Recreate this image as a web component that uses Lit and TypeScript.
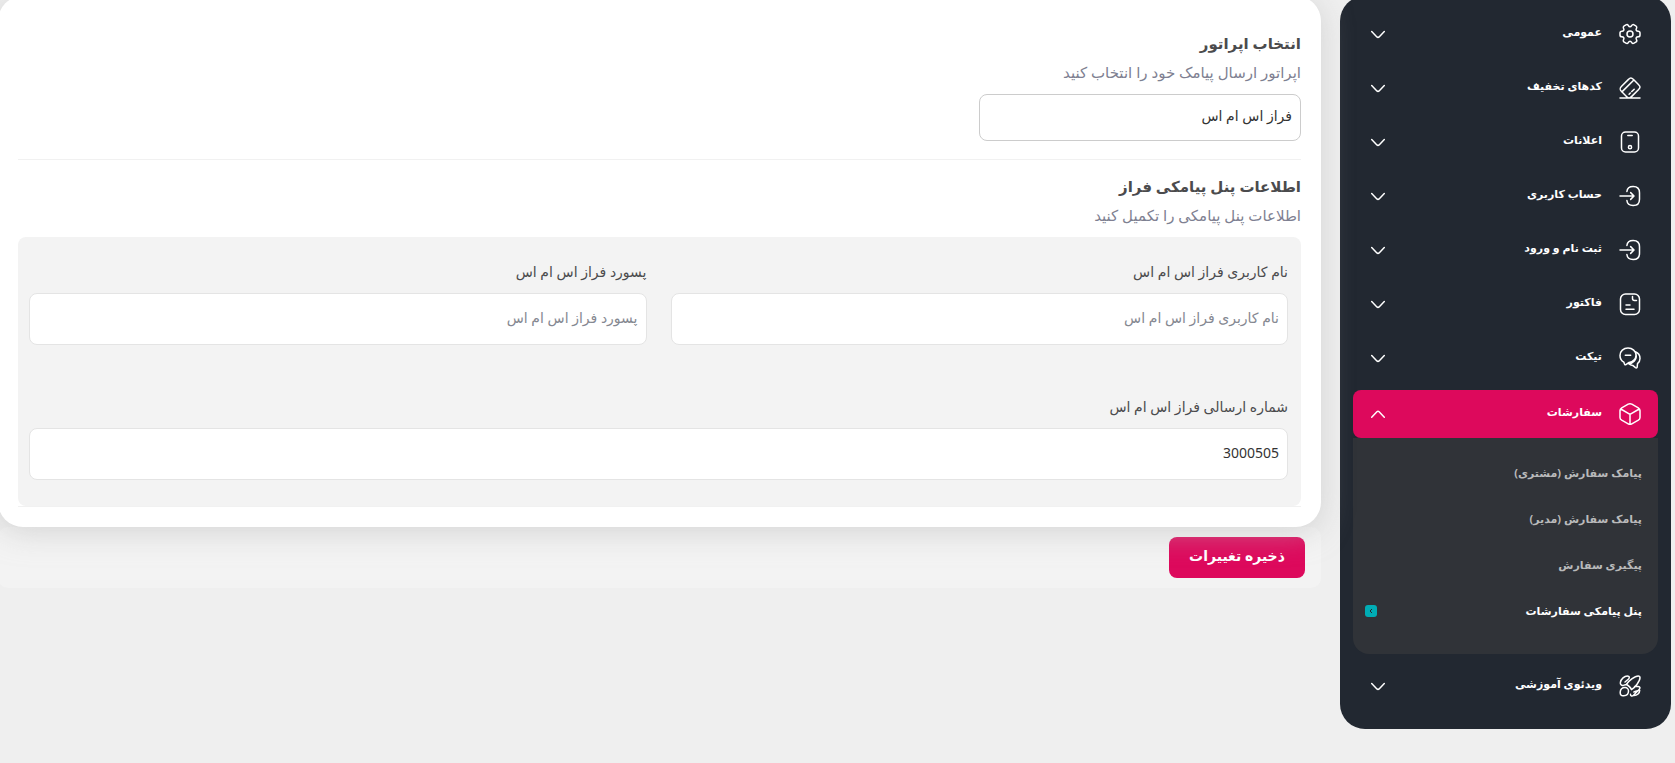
import { LitElement, html, svg, css, nothing } from "lit";
import { customElement, state } from "lit/decorators.js";

const icons: Record<string, unknown> = {
  gear: svg`<circle cx="12" cy="12" r="3"/><path d="M2 12.880v-1.760c0-1.040.85-1.900 1.900-1.900 1.810 0 2.550-1.280 1.640-2.850-.52-.9-.21-2.070.7-2.590l1.730-.99c.79-.47 1.810-.19 2.280.6l.11.19c.9 1.570 2.380 1.570 3.290 0l.11-.19c.47-.79 1.490-1.070 2.280-.6l1.730.99c.91.52 1.220 1.690.7 2.590-.91 1.570-.17 2.850 1.640 2.850 1.040 0 1.900.85 1.900 1.900v1.760c0 1.040-.85 1.900-1.900 1.900-1.810 0-2.550 1.280-1.640 2.850.52.91.21 2.070-.7 2.590l-1.730.99c-.79.47-1.810.19-2.280-.6l-.11-.19c-.9-1.570-2.380-1.570-3.290 0l-.11.19c-.47.79-1.490 1.070-2.280.6l-1.730-.99c-.91-.52-1.220-1.690-.7-2.590.91-1.570.17-2.850-1.640-2.850-1.050 0-1.900-.86-1.900-1.900Z"/>`,
  tag: svg`<path d="M3.600 10.240 10.240 3.600c2.120-2.120 3.180-2.130 5.280-.03l4.910 4.910c2.100 2.100 2.090 3.160-.03 5.280l-6.640 6.640c-2.120 2.120-3.180 2.130-5.280.03l-4.910-4.910c-2.100-2.100-2.100-3.150.03-5.280ZM3.930 15.880 15.880 3.930M11.100 18.280l1.200-1.200M13.790 15.590l2.390-2.390M2 22h20"/>`,
  phone: svg`<rect x="3.500" y="2" width="17" height="20" rx="4"/><path d="M9.800 5.500h4.400"/><circle cx="12" cy="17.200" r="1.600"/>`,
  login: svg`<path d="M8.900 7.560c.31-3.600 2.160-5.070 6.210-5.070h.13c4.470 0 6.260 1.790 6.260 6.260v6.520c0 4.470-1.790 6.260-6.260 6.260h-.13c-4.020 0-5.870-1.450-6.200-4.990M2 12h13.500M12.650 8.650 16 12l-3.350 3.350"/>`,
  doc: svg`<rect x="2.500" y="2" width="19" height="20.500" rx="5"/><path d="M14.500 4.500v2a2 2 0 0 0 2 2h2M8 13h4M8 17.200h8"/>`,
  chat: svg`<path d="M10 2c4.500 0 8 3.200 8 7.200 0 3.900-3.200 6.700-6.900 7.200l-3.200 2.300c-.6.400-1.100 0-1.400-.7l-.7-1.900C3.500 14.700 2 12.500 2 9.400 2 5.200 5.500 2 10 2ZM7.300 9.300h5.400M17.300 5.800c2.800 1.100 4.700 3.700 4.700 6.600 0 2.200-.9 3.900-2.500 5.200l-.3 3.300c-.1.900-.9 1.300-1.700.7L14.700 19.400c-1.700-.1-2.900-.7-4-1.700 3.900-.4 8.900-3.800 7.200-9.900"/>`,
  box: svg`<path d="M12 1.700c-.6 0-1.200.2-1.800.5L3.700 5.800C2.500 6.500 2 7.300 2 8.600v6.800c0 1.300.5 2.100 1.700 2.800l6.500 3.600c1.200.7 2.400.7 3.600 0l6.500-3.600c1.200-.7 1.700-1.500 1.700-2.800V8.600c0-1.300-.5-2.100-1.700-2.800l-6.500-3.600c-.6-.3-1.200-.5-1.800-.5ZM2.800 7 12 12.300 21.200 7M12 12.300v10"/>`,
  rocket: svg`<path d="M8.300 10.500C10.500 7 16.800 2 20.200 2c1.300 0 1.800.5 1.800 1.800 0 3.400-5 9.700-8.500 11.900-.5-1.800-3.400-4.700-5.200-5.200ZM7 13.500c-2.700 0-4.600 1.700-4.800 4.800-.1 2.500.9 3.800 3.500 3.500 3.100-.2 4.800-2.100 4.800-4.800 0-1.900-1.600-3.500-3.500-3.500ZM8.300 10.500l-3.100.9C3.500 11.700 2 10.500 2.400 8.300 3 4.800 6.500 2 9.300 2c2.300 0 2.700 1.700 1 3.200L7 8M16.500 12.500l3.700-.1c2 .2 2.300 1.800.9 3.100l-5.600 5.700c-1.400 1.300-3.200.9-3-.9M15.800 17.900c1.500 0 4.700-1.900 5.900-1.700 0 2.900-2.500 5.300-5.700 5.300"/>`,
};

interface SubItem { label: string; current?: boolean }
interface Item { icon: string; label: string; children?: SubItem[] }

const menu: Item[] = [
  { icon: "gear", label: "عمومی" },
  { icon: "tag", label: "کدهای تخفیف" },
  { icon: "phone", label: "اعلانات" },
  { icon: "login", label: "حساب کاربری" },
  { icon: "login", label: "ثبت نام و ورود" },
  { icon: "doc", label: "فاکتور" },
  { icon: "chat", label: "تیکت" },
  {
    icon: "box",
    label: "سفارشات",
    children: [
      { label: "پیامک سفارش (مشتری)" },
      { label: "پیامک سفارش (مدیر)" },
      { label: "پیگیری سفارش" },
      { label: "پنل پیامکی سفارشات", current: true },
    ],
  },
  { icon: "rocket", label: "ویدئوی آموزشی" },
];

const fontStack = css`"Noto Sans", "DejaVu Sans", sans-serif`;

@customElement("settings-menu")
class SettingsMenu extends LitElement {
  @state() private open = "سفارشات";

  static styles = css`
    :host { display: block; font-family: ${fontStack}; }
    .panel { background: #222831; border-radius: 25px; padding: 14px 13px 19px; }
    .list { list-style: none; margin: 0; padding: 0; display: flex; flex-direction: column; gap: 6px; }
    .expanded { margin: 2px 0; }
    .item {
      box-sizing: border-box; width: 100%; height: 48px; border: 0; border-radius: 8px;
      display: flex; align-items: center; gap: 16px; padding: 0 16px 0 13px;
      background: transparent; color: #fff; cursor: pointer;
      font: bold 11px/24px ${fontStack}; text-align: start;
    }
    .open { background: #dd095c; }
    .label { flex: 1; padding-bottom: 4px; }
    .icon { flex: none; width: 24px; height: 24px; fill: none; stroke: currentColor; stroke-width: 1.5; stroke-linecap: round; stroke-linejoin: round; }
    .sub { list-style: none; margin: 0; padding: 12px 16px 20px 12px; background: #303338; border-radius: 0 0 16px 16px; }
    .link {
      display: flex; align-items: center; justify-content: space-between; height: 46px;
      color: #b9babb; font-size: 11px; font-weight: bold; line-height: 24px; text-decoration: none;
    }
    .current { color: #fff; }
    .mark { width: 12px; height: 12px; border-radius: 3px; background: #00adb5; fill: none; stroke: #222831; }
  `;

  render() {
    return html`<nav class="panel">
      <ul class="list">
        ${menu.map((item) => {
          const open = item.label === this.open;
          return html`<li class=${open ? "expanded" : ""}>
            <button class="item ${open ? "open" : ""}" aria-expanded=${open}
              @click=${() => (this.open = open ? "" : item.label)}>
              <svg class="icon" viewBox="0 0 24 24">${icons[item.icon]}</svg>
              <span class="label">${item.label}</span>
              <svg class="icon" viewBox="0 0 24 24"><path d=${open ? "M5.700 15.200 10.900 9.800q1.100-1 2.200 0l5.200 5.400" : "M5.700 9.500l5.200 5.400q1.100 1 2.200 0l5.200-5.400"}/></svg>
            </button>
            ${open && item.children
              ? html`<ul class="sub">
                  ${item.children.map((c) => html`<li>
                    <a class="link ${c.current ? "current" : ""}" href="#">${c.label}
                      ${c.current ? html`<svg class="mark" viewBox="0 0 12 12"><path d="M7 4 5 6l2 2"/></svg>` : nothing}
                    </a>
                  </li>`)}
                </ul>`
              : nothing}
          </li>`;
        })}
      </ul>
    </nav>`;
  }
}

@customElement("app-root")
class AppRoot extends LitElement {
  static styles = css`
    :host {
      display: block; box-sizing: border-box; min-height: 100vh; overflow: hidden;
      background: #efefef; color: #4b4b4d; font-family: ${fontStack}; direction: rtl;
    }
    .layout { display: flex; align-items: flex-start; gap: 19px; margin: -4px 0 0 -2px; padding-right: 4px; }
    .side { flex: 0 0 331px; }
    .main { flex: 1; min-width: 0; }
    .card {
      position: relative; z-index: 1; background: #fff; border-radius: 25px;
      padding: 32px 20px 20px; box-shadow: 0 5px 30px rgba(187, 187, 187, 0.55);
    }
    .title { margin: 0; font-size: 15px; line-height: 30px; font-weight: bold; color: #4b4b4d; }
    .hint { margin: 0; font-size: 15px; line-height: 28px; color: #7e8091; }
    .section { border-bottom: 1px solid #f1f1f1; }
    .operator { padding-bottom: 18px; margin-bottom: 11px; }
    .select, .input {
      box-sizing: border-box; display: block; font-family: inherit; font-size: 14px;
      background: #fff; border-radius: 8px; direction: rtl; outline: none; color: #333;
    }
    .select { appearance: none; width: 322px; max-width: 100%; height: 47px; margin-top: 8px; padding: 0 8px 4px; border: 1px solid #ccc; }
    .input { width: 100%; height: 52px; padding: 0 8px 4px; border: 1px solid #e4e4e4; }
    .input::placeholder { color: #858891; opacity: 1; }
    .fields {
      display: grid; grid-template-columns: 1fr 1fr; gap: 48px 24px; margin-top: 8px;
      padding: 21px 13px 26px 11px; background: #f3f3f3; border-radius: 8px;
    }
    .wide { grid-column: 1 / -1; }
    .label { display: block; font-size: 14px; line-height: 28px; padding-bottom: 7px; }
    .footer { background: #f3f3f3; border-radius: 10px; padding: 10px 16px; }
    .save {
      display: block; height: 41px; min-width: 136px; padding: 0 16px 4px; border: 0; border-radius: 8px;
      background: #dd095c; color: #fff; font: 600 14px/24px ${fontStack}; cursor: pointer;
    }
  `;

  render() {
    return html`<div class="layout">
      <settings-menu class="side"></settings-menu>
      <main class="main">
        <form @submit=${(e: Event) => e.preventDefault()}>
          <div class="card">
            <section class="section operator">
              <h2 class="title">انتخاب اپراتور</h2>
              <p class="hint"><label for="operator">اپراتور ارسال پیامک خود را انتخاب کنید</label></p>
              <select class="select" id="operator"><option>فراز اس ام اس</option></select>
            </section>
            <section class="section">
              <h2 class="title">اطلاعات پنل پیامکی فراز</h2>
              <p class="hint">اطلاعات پنل پیامکی را تکمیل کنید</p>
              <div class="fields">
                <div>
                  <label class="label" for="user">نام کاربری فراز اس ام اس</label>
                  <input class="input" id="user" type="text" placeholder="نام کاربری فراز اس ام اس">
                </div>
                <div>
                  <label class="label" for="pass">پسورد فراز اس ام اس</label>
                  <input class="input" id="pass" type="text" placeholder="پسورد فراز اس ام اس">
                </div>
                <div class="wide">
                  <label class="label" for="number">شماره ارسالی فراز اس ام اس</label>
                  <input class="input" id="number" type="text" .value=${"3000505"}>
                </div>
              </div>
            </section>
          </div>
          <div class="footer"><button class="save" type="submit">ذخیره تغییرات</button></div>
        </form>
      </main>
    </div>`;
  }
}
